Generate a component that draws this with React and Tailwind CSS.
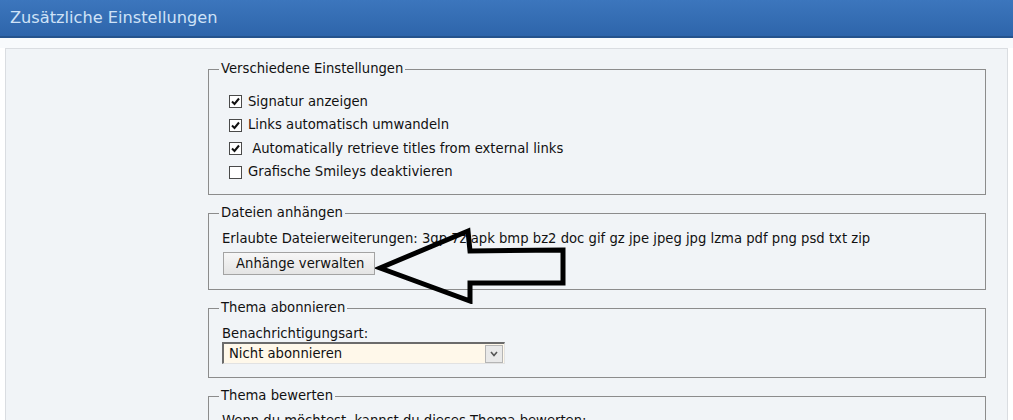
import React from 'react';

const Check = ({ checked }) => (
  <span className="w-[13px] h-[13px] border border-[#4a4a4a] bg-white flex items-center justify-center shrink-0">
    {checked && (
      <svg width="9" height="9" viewBox="0 0 9 9">
        <path d="M1 4.5 L3.5 7 L8 1.5" fill="none" stroke="#111" strokeWidth="2" />
      </svg>
    )}
  </span>
);

const Box = ({ title, children, className = '' }) => (
  <fieldset className={`border border-[#8c8c8c] px-[13px] ${className}`}>
    <legend className="-ml-[3px] px-[2px] leading-[16px] text-[#111]">{title}</legend>
    {children}
  </fieldset>
);

const options = [
  { label: 'Signatur anzeigen', checked: true },
  { label: 'Links automatisch umwandeln', checked: true },
  { label: '\u00a0Automatically retrieve titles from external links', checked: true },
  { label: 'Grafische Smileys deaktivieren', checked: false },
];

export default function App() {
  return (
    <div className="w-[1013px] h-[420px] overflow-hidden bg-white text-[13.2px] text-[#111]" style={{ fontFamily: '"DejaVu Sans", Verdana, sans-serif' }}>
      <div className="h-[38px] bg-gradient-to-b from-[#3c76bd] to-[#2e65ab] border-b-2 border-[#25538d] flex items-center px-[10px]">
        <h1 className="text-[16.2px] text-[#cfe2f7] leading-none">Zusätzliche Einstellungen</h1>
      </div>
      <div className="h-[10px] bg-[#f8fafc]" />
      <div className="relative ml-[5px] mr-[5px] border border-[#dadde1] bg-[#f1f4f7] pt-[12px] pl-[202px] pr-[21px] h-[400px]">
        <Box title="Verschiedene Einstellungen" className="pb-[10px]">
          <div className="mt-[13px] pl-[7px]">
            {options.map((o) => (
              <label key={o.label} className="h-[23.5px] flex items-center gap-[6px]">
                <Check checked={o.checked} />
                <span className="whitespace-pre">{o.label}</span>
              </label>
            ))}
          </div>
        </Box>

        <Box title="Dateien anhängen" className="mt-[10px] pb-[14px]">
          <p className="mt-[10px] leading-[16px]">
            Erlaubte Dateierweiterungen: 3gp 7z apk bmp bz2 doc gif gz jpe jpeg jpg lzma pdf png psd txt zip
          </p>
          <button className="mt-[5px] ml-px w-[152px] h-[23px] border border-[#a3a3a3] bg-gradient-to-b from-[#f7f7f7] to-[#e4e4e4] text-left pl-[12px] text-[13.2px]">
            Anhänge verwalten
          </button>
        </Box>

        <Box title="Thema abonnieren" className="mt-[10px] pb-[13px]">
          <p className="mt-[10px] leading-[16px]">Benachrichtigungsart:</p>
          <div className="w-[283px] h-[22px] flex bg-[#fff8ea] border-t-2 border-l-2 border-t-[#6b6b6b] border-l-[#6b6b6b] border-r border-b border-r-[#e2e2e2] border-b-[#e2e2e2]">
            <span className="flex-1 pl-[5px] leading-[19px]">Nicht abonnieren</span>
            <span className="w-[18px] h-[18px] mt-px mr-px border border-[#b5b5b5] bg-[#e9e9e9] flex items-center justify-center">
              <svg width="8" height="6" viewBox="0 0 8 6">
                <path d="M1 1 L4 4.5 L7 1" fill="none" stroke="#555" strokeWidth="1.6" />
              </svg>
            </span>
          </div>
        </Box>

        <Box title="Thema bewerten" className="mt-[10px] pb-[14px]">
          <p className="mt-[9px] leading-[16px]">Wenn du möchtest, kannst du dieses Thema bewerten:</p>
        </Box>

        <svg className="absolute left-[369px] top-[175px]" width="200" height="80" viewBox="0 0 200 80">
          <path
            d="M5 44 L93 7 L95 27 L188 26 L188 59 L95 59 L95 77 Z"
            fill="none"
            stroke="#000"
            strokeWidth="5"
            strokeLinejoin="miter"
          />
        </svg>
      </div>
    </div>
  );
}
